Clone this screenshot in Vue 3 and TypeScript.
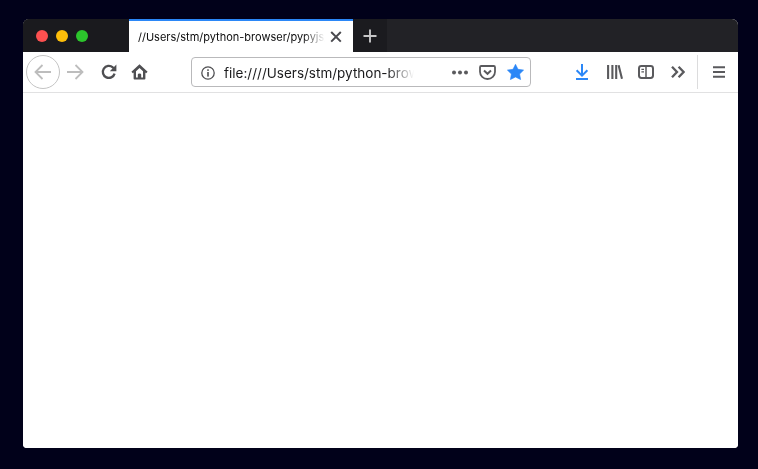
<script setup lang="ts">
const tabTitle: string = "//Users/stm/python-browser/pypyjs/index.html";
const url: string = "file:////Users/stm/python-browser/pypyjs/index.html";
</script>

<template>
  <div class="desktop">
    <div class="window">
      <div class="tabbar">
        <div class="lights">
          <span class="light red"></span>
          <span class="light yellow"></span>
          <span class="light green"></span>
        </div>
        <div class="tab">
          <span class="tab-title">{{ tabTitle }}</span>
          <svg class="tab-close" width="12" height="12" viewBox="0 0 12 12">
            <path d="M1.2 1 L10.8 10.6 M10.8 1 L1.2 10.6" stroke="#4a4a4f" stroke-width="2" fill="none" />
          </svg>
        </div>
        <div class="newtab">
          <svg width="14" height="14" viewBox="0 0 14 14">
            <path d="M7 0.5 V13.5 M0.5 7 H13.5" stroke="#c6c6c8" stroke-width="1.9" fill="none" />
          </svg>
        </div>
      </div>
      <div class="toolbar">
        <div class="nav-left">
          <div class="back">
            <svg width="18" height="16" viewBox="0 0 18 16">
              <path d="M1.5 8 H17 M8.5 1 L1.5 8 L8.5 15" stroke="#bdbdbd" stroke-width="1.8" fill="none" />
            </svg>
          </div>
          <svg class="forward" width="17" height="16" viewBox="0 0 17 16">
            <path d="M0 8 H15.5 M8.5 1 L15.5 8 L8.5 15" stroke="#bdbdbd" stroke-width="1.8" fill="none" />
          </svg>
          <svg class="reload" width="16" height="16" viewBox="0 0 16 16">
            <path d="M13.6 9.6 A6 6 0 1 1 11.8 3.4 L14.2 5.4" stroke="#4f4f52" stroke-width="2.3" fill="none" />
            <path d="M15.4 0.6 V7.2 H8.8 Z" fill="#4f4f52" />
          </svg>
          <svg class="home" width="17" height="16" viewBox="0 0 17 16">
            <path d="M0.4 7.8 L8.5 0.3 L16.6 7.8 L15.2 9.3 L14.4 8.6 V14.6 Q14.4 15.5 13.5 15.5 H3.5 Q2.6 15.5 2.6 14.6 V8.6 L1.8 9.3 Z" fill="#4f4f52" />
            <path d="M5 7.3 L8.5 4.1 L12 7.3 V13.4 H10.2 V10.4 Q10.2 9.4 8.5 9.4 Q6.8 9.4 6.8 10.4 V13.4 H5 Z" fill="#fff" />
          </svg>
        </div>
        <div class="urlbar">
          <svg class="info" width="14" height="14" viewBox="0 0 14 14">
            <circle cx="7" cy="7" r="6.2" stroke="#4f4f52" stroke-width="1.3" fill="none" />
            <rect x="6.2" y="6" width="1.6" height="4.6" fill="#4f4f52" />
            <rect x="6.2" y="3.3" width="1.6" height="1.6" fill="#4f4f52" />
          </svg>
          <span class="url">{{ url }}</span>
          <svg class="dots" width="16" height="5" viewBox="0 0 16 5">
            <circle cx="2" cy="2.5" r="2" fill="#5a5a5d" />
            <circle cx="8" cy="2.5" r="2" fill="#5a5a5d" />
            <circle cx="14" cy="2.5" r="2" fill="#5a5a5d" />
          </svg>
          <svg class="pocket" width="17" height="15" viewBox="0 0 17 15">
            <path d="M2.2 1 H14.8 Q16 1 16 2.2 V6.8 A7.5 7.2 0 0 1 1 6.8 V2.2 Q1 1 2.2 1 Z" stroke="#5a5a5d" stroke-width="1.8" fill="none" />
            <path d="M5 5.6 L8.5 8.8 L12 5.6" stroke="#5a5a5d" stroke-width="2" fill="none" />
          </svg>
          <svg class="star" width="17" height="16" viewBox="0 0 17 16">
            <path d="M8.5 0.3 L11 5.3 L16.6 6.1 L12.6 10 L13.6 15.6 L8.5 13 L3.4 15.6 L4.4 10 L0.4 6.1 L6 5.3 Z" fill="#2b87f7" stroke="#2b87f7" stroke-width="0.6" stroke-linejoin="round" />
          </svg>
        </div>
        <div class="nav-right">
          <svg class="download" width="14" height="16" viewBox="0 0 14 16">
            <path d="M7 0 V11 M1.6 6.2 L7 11.6 L12.4 6.2" stroke="#2b87f7" stroke-width="2" fill="none" />
            <rect x="1" y="14" width="12" height="2" fill="#2b87f7" />
          </svg>
          <svg class="library" width="16" height="14" viewBox="0 0 16 14">
            <path d="M1.1 0 V14 M5.4 0 V14 M9.2 0 V14 M11.6 0.2 L15 13.8" stroke="#5a5a5d" stroke-width="2.1" fill="none" />
          </svg>
          <svg class="sidebar" width="16" height="14" viewBox="0 0 16 14">
            <rect x="1" y="1" width="14" height="12" rx="2.4" stroke="#5a5a5d" stroke-width="2" fill="none" />
            <path d="M8 1 V13" stroke="#5a5a5d" stroke-width="1.5" />
            <path d="M3.4 4.4 H6 M3.4 6.8 H6" stroke="#5a5a5d" stroke-width="1.3" />
          </svg>
          <svg class="overflow" width="14" height="12" viewBox="0 0 14 12">
            <path d="M1 0.8 L6 6 L1 11.2 M7.6 0.8 L12.6 6 L7.6 11.2" stroke="#5a5a5d" stroke-width="2.3" fill="none" />
          </svg>
          <div class="divider"></div>
          <svg class="menu" width="12" height="12" viewBox="0 0 12 12">
            <path d="M0 1.2 H12 M0 6 H12 M0 10.8 H12" stroke="#5a5a5d" stroke-width="2" fill="none" />
          </svg>
        </div>
      </div>
      <div class="content"></div>
    </div>
  </div>
</template>

<style>
html, body { margin: 0; background: #01011a; }
</style>

<style scoped>
.desktop {
  width: 758px;
  height: 469px;
  box-sizing: border-box;
  padding: 19px 20px 21px 23px;
  background: #01011a;
  font-family: Inter, "Liberation Sans", sans-serif;
  overflow: hidden;
}
.window {
  height: 429px;
  display: flex;
  flex-direction: column;
  background: #fff;
  border-radius: 6px 6px 4px 4px;
  overflow: hidden;
}
.tabbar {
  height: 33px;
  flex: none;
  display: flex;
  background: #222226;
}
.lights {
  width: 106px;
  box-sizing: border-box;
  padding-left: 13px;
  display: flex;
  align-items: center;
  gap: 8px;
  background: #1a1a1e;
}
.light { width: 12px; height: 12px; border-radius: 50%; }
.red { background: #fc5050; }
.yellow { background: #fdbd0a; }
.green { background: #2cc52c; }
.tab {
  width: 224px;
  box-sizing: border-box;
  border-top: 2px solid #2b87f7;
  background: #fff;
  display: flex;
  align-items: center;
  padding-left: 9px;
  padding-right: 11px;
}
.tab-title {
  flex: 1;
  min-width: 0;
  overflow: hidden;
  white-space: nowrap;
  font-size: 11px;
  color: #0c0c0d;
  -webkit-mask-image: linear-gradient(90deg, #000 88%, transparent 100%);
  mask-image: linear-gradient(90deg, #000 88%, transparent 100%);
}
.tab-close { flex: none; margin-left: 5px; }
.newtab {
  width: 34px;
  display: flex;
  align-items: center;
  justify-content: center;
  background: #1b1b1f;
}
.toolbar {
  height: 41px;
  flex: none;
  box-sizing: border-box;
  border-bottom: 1px solid #e1e1e2;
  display: flex;
  align-items: center;
  padding-left: 3px;
  background: #fff;
}
.nav-left { display: flex; align-items: center; width: 165px; flex: none; }
.back {
  width: 32px;
  height: 32px;
  border: 1px solid #c4c4c4;
  border-radius: 50%;
  display: flex;
  align-items: center;
  justify-content: center;
  flex: none;
}
.forward { margin-left: 7px; }
.reload { margin-left: 17px; }
.home { margin-left: 14px; }
.urlbar {
  width: 340px;
  height: 30px;
  flex: none;
  box-sizing: border-box;
  border: 1px solid #b9b9bb;
  border-radius: 4px;
  display: flex;
  align-items: center;
  padding-left: 9px;
}
.info { margin-top: 1px; }
.url {
  width: 190px;
  flex: none;
  margin-left: 9px;
  padding-top: 1px;
  overflow: hidden;
  white-space: nowrap;
  font-size: 13.5px;
  color: #1a1a1c;
  -webkit-mask-image: linear-gradient(90deg, #000 86%, transparent 100%);
  mask-image: linear-gradient(90deg, #000 86%, transparent 100%);
}
.dots { margin-left: 38px; }
.pocket { margin-left: 11px; }
.star { margin-left: 11px; }
.nav-right { display: flex; align-items: center; height: 100%; }
.download { margin-left: 44px; }
.library { margin-left: 18px; }
.sidebar { margin-left: 15px; }
.overflow { margin-left: 17px; }
.divider { width: 1px; height: 34px; background: #dcdcdd; margin-left: 12px; }
.menu { margin-left: 15px; }
.content { flex: 1; background: #fff; }
</style>
